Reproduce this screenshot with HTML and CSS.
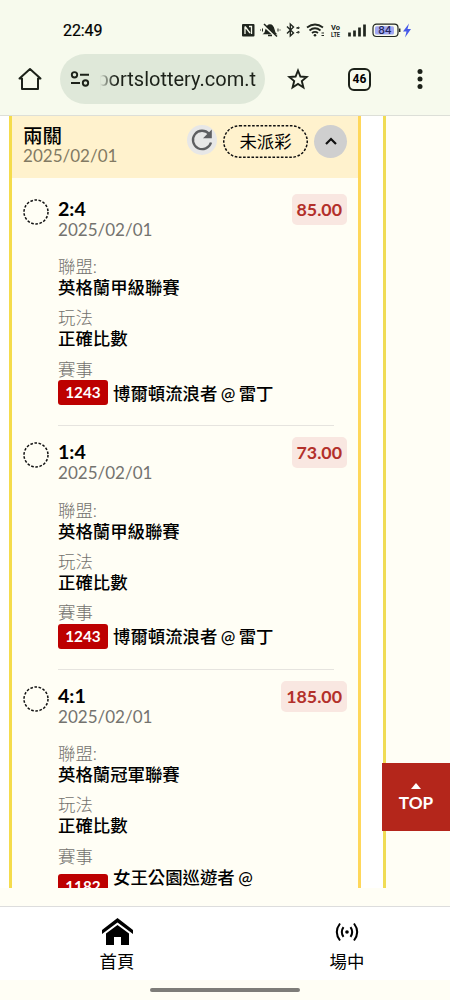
FILE: index.html
```html
<!DOCTYPE html>
<html lang="zh-Hant">
<head>
<meta charset="utf-8">
<title>投注紀錄</title>
<link rel="stylesheet" href="styles.css">
</head>
<body>
<div class="screen">
  <header class="chrome">
    <div class="status">
      <span class="clock">22:49</span>
      <svg class="status-icons" width="175" height="20" viewBox="0 0 175 20">
        <g fill="none" stroke="#20251e" stroke-width="1.5">
          <rect x="1" y="4" width="12.500" height="12.500" rx="1" fill="#20251e" stroke="none"/>
          <path d="M4 6.500V14M4 6.500l5 6.500M10.500 14V6.500H8" stroke="#f7faed" stroke-width="1.300"/>
          <path d="M23.500 13.500c2-1.500.800-8.500 5.500-8.500s3.500 7 5.500 8.500zM27 15.500h4" fill="#20251e" stroke-width="1.300"/>
          <path d="M22.500 5.500l12 11" stroke="#f7faed" stroke-width="1.800"/>
          <path d="M23 4l13 12.500"/>
          <path d="M21.500 8.500v3M37 8.500v3M19.500 9.500v1M39 9.500v1" stroke-width="1"/>
          <path d="M46 6.500l6.500 6.500-3.200 3V4l3.200 3-6.500 6.500" stroke-width="1.400"/>
          <path d="M55.500 8l2.500-1v1.500zM55.500 12.500l2.500-1V13z" stroke-width="1"/>
          <path d="M66 7.500q8-6 16 0M68.500 10.500q5.500-4.500 11 0M71 13q3-2.300 6 0" stroke-width="1.800"/>
          <circle cx="74" cy="15.300" r="1.300" fill="#20251e" stroke="none"/>
          <path d="M80.500 13h2.500M80.500 15.500h2.500" stroke-width="1"/>
          <path d="M108.500 16.500v-4M113.500 16.500v-6M118.500 16.500V7.500M123.500 16.500V4.500" stroke-width="2.700"/>
          <rect x="132" y="4.200" width="25" height="12.300" rx="3.500" stroke-width="1.200"/>
          <rect x="134" y="6.200" width="19" height="8.300" rx="1.500" fill="#a2a7f2" stroke="none"/>
          <path d="M158.700 8.500v3.500" stroke-width="1.500"/>
          <path d="M168 3.500l-6 8h3.500l-1.500 6 6-8.500h-3.500z" fill="#4659e8" stroke="none"/>
        </g>
        <text x="90" y="9.500" class="tiny" textLength="9" lengthAdjust="spacingAndGlyphs">Vo</text>
        <text x="90" y="16.500" class="tiny" textLength="9" lengthAdjust="spacingAndGlyphs">LTE</text>
        <text x="144" y="14.200" class="battery">84</text>
      </svg>
    </div>
    <div class="toolbar">
      <svg class="home" width="24" height="24" viewBox="0 0 24 24" fill="none" stroke="#1c2119" stroke-width="2" stroke-linejoin="round"><path d="M4 11.500H1.500L12 2l10.500 9.500H20V22H4z"/></svg>
      <div class="address">
        <svg width="22" height="18" viewBox="0 0 22 18" fill="none" stroke="#1c2119" stroke-width="1.900"><circle cx="5.500" cy="4.800" r="2.700"/><path d="M11 4.800h9M2 13h9"/><circle cx="16.500" cy="13" r="2.700"/></svg>
        <div class="url"><span>portslottery.com.t</span></div>
      </div>
      <svg class="star" width="22" height="22" viewBox="0 0 22 22" fill="none" stroke="#1c2119" stroke-width="1.900"><path d="M11 2.500l2.400 6 6.300.500-4.900 4.100 1.600 6.400-5.400-3.500-5.400 3.500 1.600-6.400L2.300 9l6.300-.500z"/></svg>
      <span class="tabs">46</span>
      <svg class="more" width="6" height="22" viewBox="0 0 6 22" fill="#1c2119"><circle cx="3" cy="3.500" r="2.500"/><circle cx="3" cy="11" r="2.500"/><circle cx="3" cy="18.500" r="2.500"/></svg>
    </div>
  </header>

  <main class="viewport">
    <section class="card">
      <div class="group">
        <div class="group-title"><span class="combo">兩關</span><span class="date">2025/02/01</span></div>
        <span class="refresh"><svg width="24" height="24" viewBox="0 0 24 24"><path d="M21 14.500A9.200 9.200 0 1 1 19 5.800" fill="none" stroke="#5d5e61" stroke-width="2.300"/><path d="M21.800 1.500v8.800H13z" fill="#5d5e61"/></svg></span>
        <span class="pill"><svg width="85" height="33" viewBox="0 0 85 33"><rect x=".75" y=".75" width="83.500" height="31.500" rx="15.750"/></svg><b>未派彩</b></span>
        <span class="toggle"><svg width="12" height="8" viewBox="0 0 12 8" fill="none" stroke="#111" stroke-width="2.200"><path d="M1 7l5-5 5 5"/></svg></span>
      </div>
      <article class="bet">
        <svg class="ring" width="26" height="26" viewBox="0 0 26 26"><circle cx="13" cy="13" r="12"/></svg>
        <div class="detail">
          <h2>2:4</h2><p class="date">2025/02/01</p>
          <dl><dt>聯盟:</dt><dd>英格蘭甲級聯賽</dd><dt>玩法</dt><dd>正確比數</dd><dt>賽事</dt><dd class="match"><span class="code">1243</span><span class="teams">博爾頓流浪者 @ 雷丁</span></dd></dl>
        </div>
        <span class="odds">85.00</span>
      </article>
      <article class="bet">
        <svg class="ring" width="26" height="26" viewBox="0 0 26 26"><circle cx="13" cy="13" r="12"/></svg>
        <div class="detail">
          <h2>1:4</h2><p class="date">2025/02/01</p>
          <dl><dt>聯盟:</dt><dd>英格蘭甲級聯賽</dd><dt>玩法</dt><dd>正確比數</dd><dt>賽事</dt><dd class="match"><span class="code">1243</span><span class="teams">博爾頓流浪者 @ 雷丁</span></dd></dl>
        </div>
        <span class="odds">73.00</span>
      </article>
      <article class="bet">
        <svg class="ring" width="26" height="26" viewBox="0 0 26 26"><circle cx="13" cy="13" r="12"/></svg>
        <div class="detail">
          <h2>4:1</h2><p class="date">2025/02/01</p>
          <dl><dt>聯盟:</dt><dd>英格蘭冠軍聯賽</dd><dt>玩法</dt><dd>正確比數</dd><dt>賽事</dt><dd class="match"><span class="code">1182</span><span class="teams">女王公園巡遊者 @<br>米爾沃爾</span></dd></dl>
        </div>
        <span class="odds">185.00</span>
      </article>
    </section>
    <div class="next-card"></div>
    <a class="top"><svg width="10" height="6" viewBox="0 0 10 6"><path d="M0 6l5-6 5 6z" fill="#fff"/></svg>TOP</a>
  </main>

  <nav class="tabbar">
    <a><svg width="31" height="28" viewBox="0 0 31 28"><path d="M15.500 0L31 12v4L15.500 4.500 0 16v-4z"/><path d="M15.500 7L27 15.500V27h-8v-8h-7v8H4V15.500z"/></svg><span>首頁</span></a>
    <a><svg width="24" height="28" viewBox="0 0 24 28" fill="none" stroke="#000" stroke-width="2"><circle cx="12" cy="14" r="1.800" fill="#000" stroke="none"/><path d="M8.500 9.200q-3.400 4.800 0 9.600M15.500 9.200q3.400 4.800 0 9.600M5 5.500q-6.400 8.500 0 17M19 5.500q6.400 8.500 0 17"/></svg><span>場中</span></a>
  </nav>
  <div class="gesture"><i></i></div>
</div>
</body>
</html>
```

FILE: styles.css
```css
* { box-sizing: border-box; }
body { margin: 0; background: #fffef5; color: #000; font-family: Lato, "Noto Sans CJK TC", sans-serif; font-size: 17.4px; }
h2, p, dl, dd { margin: 0; }
svg { display: block; flex: none; }
.screen { width: 450px; height: 1000px; overflow: hidden; display: flex; flex-direction: column; }

.chrome { height: 115px; flex: none; background: #f7faed; }
.status { height: 54px; padding: 6px 34px 0 63px; display: flex; align-items: center; justify-content: space-between; }
.clock { font: 400 16px Roboto, sans-serif; -webkit-text-stroke: .2px #000; letter-spacing: -.1px; }
.tiny { font: 700 7px Roboto, sans-serif; fill: #20251e; }
.battery { font: 500 10.500px Inter, sans-serif; fill: #22265a; text-anchor: middle; }
.toolbar { height: 50px; display: flex; align-items: center; padding: 0 27px 0 18px; }
.address { width: 205px; height: 50px; margin-left: 18px; border-radius: 25px; background: #dfe8d9; display: flex; align-items: center; padding-left: 9px; }
.url { width: 156px; margin-left: 9px; overflow: hidden; display: flex; justify-content: flex-end; font: 20px/28px Roboto, sans-serif; color: #1c2119; -webkit-mask-image: linear-gradient(90deg, transparent, #000 14px); mask-image: linear-gradient(90deg, transparent, #000 14px); }
.star { margin-left: 22px; }
.tabs { width: 23px; height: 23px; margin-left: 39px; border: 2px solid #1c2119; border-radius: 6px; font: 700 12px/19px Roboto, sans-serif; text-align: center; }
.more { margin-left: auto; }

.viewport { height: 773px; flex: none; display: flex; overflow: hidden; background: #fff; box-shadow: inset 0 1px #dddfd8; padding: 1px 0 0 9px; position: relative; }
.card { width: 352px; height: 772px; flex: none; background: #fffef5; border: solid #f5dc4c; border-width: 0 3px; border-right-color: #ffd75a; overflow: hidden; }
.next-card { flex: 1; margin-left: 22px; border-left: 3px solid #f0dc55; background: #fffef5; }
.group { height: 62px; margin-bottom: 4.500px; background: #fff2cd; display: flex; align-items: flex-start; padding: 9px 11px 0; }
.group-title { flex: 1; display: flex; flex-direction: column; line-height: 21px; }
.combo { font-size: 19.500px; font-weight: 500; }
.date { color: #74736f; font-size: 17.050px; line-height: 21px; }
.group .date { color: #827a63; margin-top: -1px; }
.refresh, .toggle { border-radius: 50%; display: flex; align-items: center; justify-content: center; }
.refresh { width: 30px; height: 30px; background: #e7e7e7; margin-right: 6px; }
.pill { width: 85px; height: 33px; display: grid; margin-right: 6px; }
.pill > * { grid-area: 1 / 1; }
.pill b { font-weight: 400; line-height: 33px; text-align: center; }
.pill rect, .ring circle { fill: none; stroke: #111; stroke-width: 1.500; stroke-dasharray: 2.600 1.600; }
.toggle { width: 33px; height: 33px; background: #cfcfcf; }
.toggle svg { margin-bottom: 2px; }

.bet { height: 243.500px; padding: 15px 11px 0 10.500px; display: grid; grid-template-columns: 26px 1fr auto; column-gap: 9.500px; align-items: start; }
.ring { margin-top: 1px; }
.detail { grid-area: 1 / 2 / 2 / 4; width: 276px; height: 228.500px; border-bottom: 1px solid #e6e4df; }
.bet:last-child .detail { border: 0; }
h2 { font-size: 19.600px; font-weight: 700; line-height: 21px; }
dl { margin-top: 17.500px; line-height: 21px; }
dt { color: #73726e; font-weight: 300; height: 20px; line-height: 20px; }
dd { margin-bottom: 10.300px; font-weight: 500; }
.match { display: flex; align-items: center; min-height: 26px; line-height: 19px; word-spacing: -1px; }
.teams { padding-top: 1px; }
.code { width: 50px; height: 25px; margin-right: 5px; border-radius: 3px; background: #bd0000; color: #fff; font-weight: 700; font-size: 15.300px; line-height: 25px; text-align: center; }
.odds { grid-area: 1 / 3; margin-top: -4px; padding: 0 5px; height: 31px; border-radius: 5px; background: #f9e7e1; color: #b3302a; font-weight: 700; font-size: 17.800px; line-height: 31px; }
.top { position: absolute; right: 0; top: 648px; width: 68px; height: 68px; background: #b4261b; color: #fff; font-size: 17.200px; font-weight: 700; display: flex; flex-direction: column; align-items: center; padding-top: 20px; line-height: 28px; }

.tabbar { height: 74px; margin-top: 18px; border-top: 1px solid #ddd; background: #fff; display: grid; grid-template-columns: 234px 1fr; flex: none; }
.tabbar a { display: flex; flex-direction: column; align-items: center; padding-top: 11px; line-height: 32px; font-weight: 400; }
.tabbar a + a { margin-left: 10px; }
.gesture { padding-top: 8px; }
.gesture i { display: block; width: 150px; height: 4px; margin: 0 auto; border-radius: 2px; background: #7e7d79; }
```
